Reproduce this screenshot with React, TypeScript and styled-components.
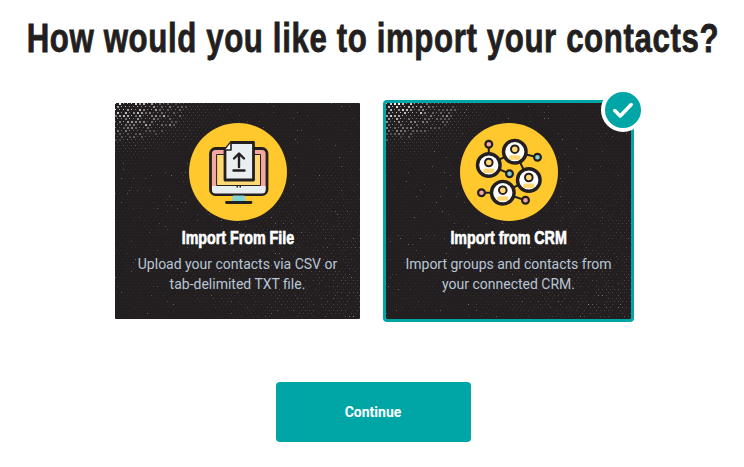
import React, { useMemo } from "react";
import styled, { createGlobalStyle } from "styled-components";

const Global = createGlobalStyle`
  html, body { margin: 0; padding: 0; background: #fff; }
  body { font-family: Roboto, "Liberation Sans", sans-serif; }
`;

const INK = "#231f20";
const TEAL = "#00a6a6";

const Page = styled.main`
  width: 744px;
  height: 467px;
  padding: 0 0 0 2px;
  box-sizing: border-box;
  display: flex;
  flex-direction: column;
  align-items: center;
  overflow: hidden;
`;

const Heading = styled.h1`
  margin: 0;
  height: 100px;
  line-height: 76px;
  font-family: "Liberation Sans", sans-serif;
  font-weight: 700;
  font-size: 40px;
  letter-spacing: 0.8px;
  color: ${INK};
  white-space: nowrap;
  transform: scaleX(0.78);
  -webkit-text-stroke: 0.8px ${INK};
`;

const Cards = styled.div`
  display: flex;
  gap: 20px;
`;

const Card = styled.section<{ $selected?: boolean }>`
  position: relative;
  box-sizing: border-box;
  width: 251px;
  height: 222px;
  border: 3px solid ${(p) => (p.$selected ? TEAL : "transparent")};
  border-radius: 4px;
  background: ${INK};
  background-clip: padding-box;
  display: flex;
  flex-direction: column;
  align-items: center;
  padding-top: 20px;
`;

const TextureSvg = styled.svg`
  position: absolute;
  inset: 0;
  width: 245px;
  height: 216px;
`;

const Disc = styled.svg`
  position: relative;
  display: block;
  width: 98px;
  height: 98px;
  flex: none;
`;

const Title = styled.h2`
  position: relative;
  margin: 7px 0 0;
  height: 20px;
  line-height: 20px;
  font-family: "Liberation Sans", sans-serif;
  font-weight: 700;
  font-size: 19px;
  color: #fff;
  white-space: nowrap;
  transform: scaleX(0.75);
  -webkit-text-stroke: 0.7px #fff;
`;

const Description = styled.p`
  position: relative;
  margin: 6px 0 0;
  width: 225px;
  text-align: center;
  font-size: 14px;
  line-height: 20px;
  color: #b9c6d6;
`;

const Badge = styled.div`
  position: absolute;
  top: -15px;
  right: -14px;
  box-sizing: border-box;
  width: 44px;
  height: 44px;
  border-radius: 50%;
  border: 4px solid #fff;
  background: ${TEAL};
  display: flex;
  align-items: center;
  justify-content: center;
`;

const Continue = styled.button`
  margin-top: 60px;
  width: 195px;
  height: 60px;
  border: 0;
  border-radius: 4px;
  background: ${TEAL};
  color: #fff;
  font-family: Roboto, sans-serif;
  font-weight: 700;
  font-size: 14px;
`;

function Texture({ seed }: { seed: number }) {
  const dots = useMemo(() => {
    let s = seed;
    const rnd = () => {
      s = (s * 16807) % 2147483647;
      return s / 2147483647;
    };
    const out: { x: number; y: number; w: number; o: number }[] = [];
    for (let r = 0; r < 72; r++) {
      for (let c = 0; c < 62; c++) {
        const x = c * 4 + (r % 2 ? 2 : 0);
        const y = r * 3;
        const d = Math.hypot(x * 0.8, y * 1.6);
        const corner = Math.max(0, 1 - d / 105);
        const far = Math.hypot(245 - x, 216 - y);
        const edge = Math.max(0, 1 - far / 170);
        const keep = rnd();
        const base = keep > 0.35 ? 0.05 + 0.24 * edge * rnd() : 0.02;
        const sparkle = rnd() > 0.93 ? 0.3 * rnd() : 0;
        const o = Math.min(0.95, base + sparkle + corner * corner * 0.95 * (0.55 + 0.6 * rnd()));
        const w = corner > 0.45 && rnd() > 0.55 ? 2 : 1;
        out.push({ x, y, w, o });
      }
    }
    return out;
  }, [seed]);
  return (
    <TextureSvg viewBox="0 0 245 216" aria-hidden>
      {dots.map((d, i) => (
        <rect key={i} x={d.x} y={d.y} width={d.w} height={d.w} fill="#fff" opacity={d.o} />
      ))}
    </TextureSvg>
  );
}

function FileIcon() {
  return (
    <Disc viewBox="188.5 123 98 98" aria-hidden>
      <circle cx="237.5" cy="172" r="49" fill="#ffc82c" />
      <g stroke={INK} strokeWidth="2.8" strokeLinejoin="round" strokeLinecap="round">
        <rect x="210" y="148.500" width="56.500" height="46" rx="5" fill="#f4a6a0" />
        <path d="M216.500 154.500h43.500v31h-43.500z" fill="#ffd873" stroke={INK} strokeWidth="1" />
        <path d="M211.500 186h53.500v4a3.500 3.500 0 0 1-3.500 3.500h-46.500a3.500 3.500 0 0 1-3.500-3.500z" fill="#e9eef0" stroke="none" />
        <path d="M232.500 195.500h11.500l1.500 6.500h-14.500z" fill="#80d4d2" stroke="none" />
        <path d="M226 202.500h24.500" fill="none" />
        <path d="M224.500 150l6-7.500h22.500v37.500h-28.500z" fill="#e9eef0" />
        <path d="M224.500 150h6v-7.500" fill="#fff" strokeWidth="1.600" />
        <path d="M238.500 167v-13M233.500 158.500l5-5 5 5M233 170.500h11" fill="none" strokeWidth="2.400" />
      </g>
      <rect x="236" y="186" width="1.500" height="1.500" fill={INK} />
      <rect x="239" y="186" width="1.500" height="1.500" fill={INK} />
    </Disc>
  );
}

function Person({ x, y }: { x: number; y: number }) {
  return (
    <g>
      <circle cx={x} cy={y} r="11.300" fill="#fff" stroke={INK} strokeWidth="3.400" />
      <circle cx={x} cy={y - 2.500} r="3.800" fill="#ffd873" stroke={INK} strokeWidth="2" />
      <rect x={x - 5.500} y={y + 3.500} width="11" height="4.500" rx="1.500" fill="#ffd873" />
    </g>
  );
}

function CrmIcon() {
  return (
    <Disc viewBox="459.5 123 98 98" aria-hidden>
      <circle cx="508.500" cy="172" r="49" fill="#ffc82c" />
      <path
        d="M488.300 144.300V165L514.300 151.700 537 157.300M488.300 165L509 173.700M514.300 151.700L528.300 180 502.300 192.700 481 192.700M502.300 192.700L525 200.300"
        fill="none"
        stroke={INK}
        strokeWidth="2"
      />
      {[
        [488.3, 144.3, "#f4a6a0"],
        [537, 157.3, "#80d4d2"],
        [509, 173.7, "#80d4d2"],
        [481, 192.7, "#f4a6a0"],
        [525, 200.3, "#f4a6a0"],
      ].map(([x, y, f]) => (
        <circle key={`${x}`} cx={x as number} cy={y as number} r="3.400" fill={f as string} stroke={INK} strokeWidth="2.200" />
      ))}
      <Person x={488.3} y={165} />
      <Person x={514.3} y={151.7} />
      <Person x={528.3} y={180} />
      <Person x={502.3} y={192.7} />
    </Disc>
  );
}

export default function App() {
  return (
    <Page>
      <Global />
      <Heading>How would you like to import your contacts?</Heading>
      <Cards>
        <Card>
          <Texture seed={12345} />
          <FileIcon />
          <Title>Import From File</Title>
          <Description>Upload your contacts via CSV or tab-delimited TXT file.</Description>
        </Card>
        <Card $selected>
          <Texture seed={777} />
          <CrmIcon />
          <Title>Import from CRM</Title>
          <Description>Import groups and contacts from your connected CRM.</Description>
          <Badge>
            <svg width="22" height="18" viewBox="0 0 20 16" aria-hidden>
              <path d="M2.500 8.500l5 5 10-10.500" fill="none" stroke="#fff" strokeWidth="3.200" strokeLinecap="round" strokeLinejoin="round" />
            </svg>
          </Badge>
        </Card>
      </Cards>
      <Continue>Continue</Continue>
    </Page>
  );
}
